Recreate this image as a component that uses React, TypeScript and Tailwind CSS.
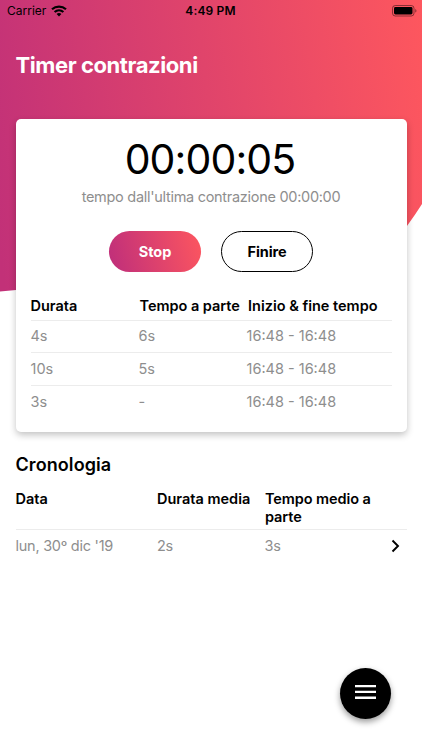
import React from 'react';

interface Contraction {
  duration: string;
  apart: string;
  time: string;
}

const contractions: Contraction[] = [
  { duration: '4s', apart: '6s', time: '16:48 - 16:48' },
  { duration: '10s', apart: '5s', time: '16:48 - 16:48' },
  { duration: '3s', apart: '-', time: '16:48 - 16:48' },
];

const history = [{ date: "lun, 30º dic '19", duration: '2s', apart: '3s' }];

const Background = () => (
  <svg className="absolute left-0 top-0 -z-10" width="422" height="292" viewBox="0 0 422 292">
    <defs>
      <linearGradient id="bg" gradientUnits="userSpaceOnUse" x1="-10" y1="180" x2="440" y2="120">
        <stop offset="0" stopColor="#c23178" />
        <stop offset="1" stopColor="#fe575e" />
      </linearGradient>
    </defs>
    <path d="M0 0H422V204Q415 215 407 226C375 264 200 284 16 290L0 291.5Z" fill="url(#bg)" />
  </svg>
);

const StatusBar = () => (
  <div className="flex h-[22px] items-center justify-between pl-[7px] pr-[5px] text-black">
    <div className="flex w-[159px] items-center gap-[5px]">
      <span className="text-[12px]">Carrier</span>
      <svg width="16" height="12" viewBox="0 0 16 12" fill="none" stroke="currentColor" strokeWidth="2.2">
        <path d="M1 4.3C5 .6 11 .6 15 4.3" />
        <path d="M3.6 7C6.2 4.7 9.8 4.7 12.4 7" />
        <path d="M8 11.4L5.6 9C7 7.8 9 7.8 10.4 9Z" fill="currentColor" stroke="none" />
      </svg>
    </div>
    <span className="text-[12px] font-semibold tracking-[0.15px]">4:49 PM</span>
    <div className="flex w-[162px] justify-end">
      <svg width="25" height="12" viewBox="0 0 25 12">
        <rect x=".5" y=".5" width="21.5" height="10.5" rx="2.8" fill="none" stroke="#000" strokeOpacity=".45" />
        <rect x="2" y="2" width="18.5" height="7.5" rx="1.4" />
        <path d="M23.3 3.9C24.8 4.5 24.8 7 23.3 7.6Z" fillOpacity=".5" />
      </svg>
    </div>
  </div>
);

const App: React.FC = () => {
  return (
    <div className="relative isolate h-[750px] w-[422px] overflow-hidden bg-white font-['Inter',sans-serif] text-black">
      <Background />
      <StatusBar />

      <div className="px-[15.5px]">
        <h1 className="mt-[29px] text-[22px] font-bold leading-7 tracking-[-0.42px] text-white">Timer contrazioni</h1>

        <div className="mt-10 h-[313px] rounded-[5px] bg-white px-[15px] pt-4 shadow-[0_3px_7px_rgba(0,0,0,0.24)]">
          <p className="pr-[2px] text-center text-[41px] leading-[48px] tracking-[-0.9px]">00:00:05</p>
          <p className="mt-[5px] text-center text-[14.5px] leading-[18px] tracking-[-0.29px] text-[#8e8e8e]">
            tempo dall'ultima contrazione 00:00:00
          </p>

          <div className="mt-[25px] flex justify-center gap-5">
            <button className="h-[41px] w-[92px] rounded-full bg-linear-[75deg,#be2e7b,#fd565f] text-[14.5px] font-bold text-white">
              Stop
            </button>
            <button className="h-[41px] w-[92px] rounded-full border border-black text-[14.5px] font-bold tracking-[-0.1px]">
              Finire
            </button>
          </div>

          <div className="mt-[21px]">
            <div className="flex h-[27.5px] items-center border-b border-[#ececec] text-[14.5px] font-semibold">
              <span className="w-[109px]">Durata</span>
              <span className="w-[108.5px] whitespace-nowrap tracking-[-0.03px]">Tempo a parte</span>
              <span className="whitespace-nowrap">Inizio & fine tempo</span>
            </div>
            {contractions.map((item, i) => (
              <div
                key={i}
                className="flex h-[32.5px] items-center border-b border-[#ececec] text-[14.5px] text-[#8e8e8e] last:border-b-0"
              >
                <span className="w-[108px]">{item.duration}</span>
                <span className="w-[108px]">{item.apart}</span>
                <span>{item.time}</span>
              </div>
            ))}
          </div>
        </div>

        <h2 className="mt-[20.5px] text-[18px] font-semibold leading-6 tracking-[0.08px]">Cronologia</h2>

        <div className="mt-[13.5px] flex h-[40px] border-b border-[#ececec] text-[14.5px] font-semibold leading-[17.5px]">
          <span className="w-[141.5px]">Data</span>
          <span className="w-[108px]">Durata media</span>
          <span className="w-[120px] tracking-[-0.08px]">Tempo medio a parte</span>
        </div>
        {history.map((item) => (
          <div key={item.date} className="flex h-8 items-center text-[14.5px] tracking-[-0.25px] text-[#8e8e8e]">
            <span className="w-[141.5px]">{item.date}</span>
            <span className="w-[107.5px]">{item.duration}</span>
            <span className="flex-1">{item.apart}</span>
            <svg className="mr-[7px]" width="9" height="14" viewBox="0 0 9 14" fill="none" stroke="#000" strokeWidth="1.9">
              <path d="M1.5 1.5L7 7L1.5 12.5" />
            </svg>
          </div>
        ))}
      </div>

      <button className="absolute left-[340px] top-[668px] flex h-[51px] w-[51px] items-center justify-center rounded-full bg-black shadow-[0_3px_6px_rgba(0,0,0,0.4)]">
        <svg className="mb-[3px]" width="21" height="14" viewBox="0 0 21 14" fill="#fff">
          <path d="M0 0H21V2.3H0ZM0 5.8H21V8.1H0ZM0 11.6H21V13.9H0Z" />
        </svg>
      </button>
    </div>
  );
};

export default App;
